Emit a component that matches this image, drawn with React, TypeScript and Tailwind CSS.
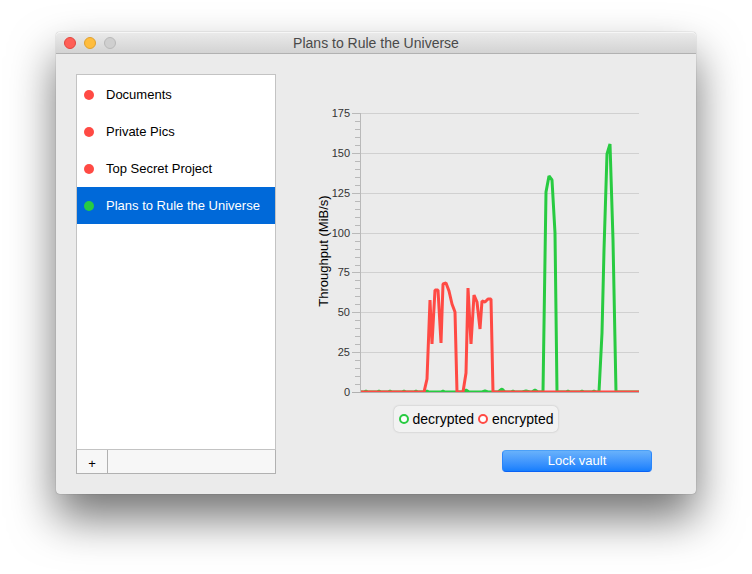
import React, { useState } from "react";

type Vault = { name: string; unlocked: boolean };

const vaults: Vault[] = [
  { name: "Documents", unlocked: false },
  { name: "Private Pics", unlocked: false },
  { name: "Top Secret Project", unlocked: false },
  { name: "Plans to Rule the Universe", unlocked: true },
];

const ticks = [
  { value: 175, y: 39 },
  { value: 150, y: 79 },
  { value: 125, y: 119 },
  { value: 100, y: 159 },
  { value: 75, y: 198 },
  { value: 50, y: 238 },
  { value: 25, y: 278 },
  { value: 0, y: 318 },
];

const minorTicks = ticks.slice(0, -1).flatMap((t) => [8, 16, 24, 32].map((d) => t.y + d));

const encrypted =
  "85,318 148,318 151,305 154,226 156,270 159,216 162,216 165,269 167,210 170,209 173,217 176,230 179,238 181,318 187,318 190,299 192,214 195,270 198,221 201,228 204,255 206,227 209,228 212,225 215,225 217,318 363,318";

const decrypted =
  "85,318 88,318 90,317 92,318 101,318 103,317 105,318 112,318 114,317 116,318 126,318 128,317 130,318 138,318 140,317 142,318 149,318 151,317 153,318 165,318 167,317 169,318 187,318 190,316 193,318 206,318 209,317 212,318 222,318 226,315 229,318 235,318 237,317 239,318 246,318 250,317 254,318 256,318 259,316 262,318 267,318 270,118 273,102 276,106 279,159 281,318 290,318 292,317 294,318 304,318 306,317 308,318 316,318 318,317 320,318 323,318 326,259 328,176 331,80 334,70 337,166 340,318 363,318";

function ThroughputChart() {
  return (
    <svg
      viewBox="0 0 400 329"
      className="block w-full max-w-[400px]"
      role="img"
      aria-label="Throughput of encrypted and decrypted data"
    >
      <defs>
        <clipPath id="plot">
          <rect x="84" y="38" width="279" height="280" />
        </clipPath>
      </defs>
      <g shapeRendering="crispEdges">
        {ticks.map((t) => (
          <g key={t.value}>
            <rect x="85" y={t.y} width="278" height="1" fill="#d0d0d0" />
            <rect x="76" y={t.y} width="8" height="1" fill="#b9b9b9" />
          </g>
        ))}
        {minorTicks.map((y) => (
          <rect key={y} x="79" y={y} width="5" height="1" fill="#b9b9b9" />
        ))}
        <rect x="84" y="39" width="1" height="280" fill="#b9b9b9" />
        <rect x="76" y="318" width="287" height="1" fill="#b0b0b0" />
      </g>
      <g fontSize="11" fill="#333333" textAnchor="end">
        {ticks.map((t) => (
          <text key={t.value} x="74" y={t.y + 4}>
            {t.value}
          </text>
        ))}
      </g>
      <text fontSize="13" textAnchor="middle" transform="translate(52 177) rotate(-90)">
        Throughput (MiB/s)
      </text>
      <g clipPath="url(#plot)" fill="none" strokeWidth="3" strokeLinejoin="bevel">
        <polyline points={decrypted} stroke="#28cb41" />
        <polyline points={encrypted} stroke="#ff4a44" />
      </g>
    </svg>
  );
}

function LegendItem({ label, ring }: { label: string; ring: string }) {
  return (
    <span className="flex items-center gap-1">
      <span className={`size-[10px] rounded-full border-2 bg-white ${ring}`} />
      {label}
    </span>
  );
}

export default function App() {
  const [selected, setSelected] = useState(3);

  return (
    <div className="overflow-hidden bg-white px-14 pt-8 pb-20 font-['Liberation_Sans',Arial,sans-serif] text-[13px] text-black">
      <div className="rounded-[4px] bg-[#ebebeb] shadow-[0_0_1px_rgba(0,0,0,0.5),0_24px_45px_rgba(0,0,0,0.55)]">
        <header className="grid h-[22px] grid-cols-[1fr_auto_1fr] items-center rounded-t-[4px] border-b border-[#b1b1b1] bg-linear-to-b from-[#ebebeb] to-[#d3d3d3] px-2 shadow-[inset_0_1px_0_#f6f6f6]">
          <div className="flex gap-2">
            <button aria-label="Close" className="size-3 rounded-full border border-[#e2463f] bg-[#ff5f57]" />
            <button aria-label="Minimize" className="size-3 rounded-full border border-[#e1a12f] bg-[#ffbd3e]" />
            <button aria-label="Zoom" disabled className="size-3 rounded-full border border-[#b9b9b9] bg-[#cfcfcf]" />
          </div>
          <h1 className="pt-px text-[14px] leading-4 text-[#4a4a4a]">Plans to Rule the Universe</h1>
        </header>

        <main className="flex p-5">
          <aside className="flex h-[400px] w-[200px] shrink-0 flex-col">
            <ul className="flex-1 border border-[#c3c3c3] bg-white pt-px">
              {vaults.map((v, i) => (
                <li key={v.name}>
                  <button
                    onClick={() => setSelected(i)}
                    className={`flex h-[37px] w-full items-center gap-3 pl-[7px] text-left whitespace-nowrap ${
                      i === selected ? "bg-[#0069d9] text-white" : ""
                    }`}
                  >
                    <span className={`size-[10px] rounded-full ${v.unlocked ? "bg-[#28cb41]" : "bg-[#ff4a44]"}`} />
                    {v.name}
                  </button>
                </li>
              ))}
            </ul>
            <div className="flex h-6 border border-t-0 border-[#b1b1b1] bg-[#f7f7f7]">
              <button aria-label="Add vault" className="w-[31px] border-r border-[#b1b1b1] pt-1 leading-4">
                +
              </button>
            </div>
          </aside>

          <section className="flex flex-1 flex-col items-center">
            <ThroughputChart />
            <div className="mt-[3px] flex h-[26px] items-center gap-1 rounded-[5px] bg-[#f2f2f2] px-[5px] text-[14px] shadow-[0_0_2px_#b4b4b4]">
              <LegendItem label="decrypted" ring="border-[#28cb41]" />
              <LegendItem label="encrypted" ring="border-[#ff4a44]" />
            </div>
            <button className="mt-[18px] mr-6 h-[22px] w-[150px] self-end rounded-[4px] border border-t-[#4ba0f8] border-r-[#2a86fa] border-b-[#0a62f5] border-l-[#2a86fa] bg-linear-to-b from-[#68b1fb] to-[#157efd] leading-5 text-white">
              Lock vault
            </button>
          </section>
        </main>
      </div>
    </div>
  );
}
